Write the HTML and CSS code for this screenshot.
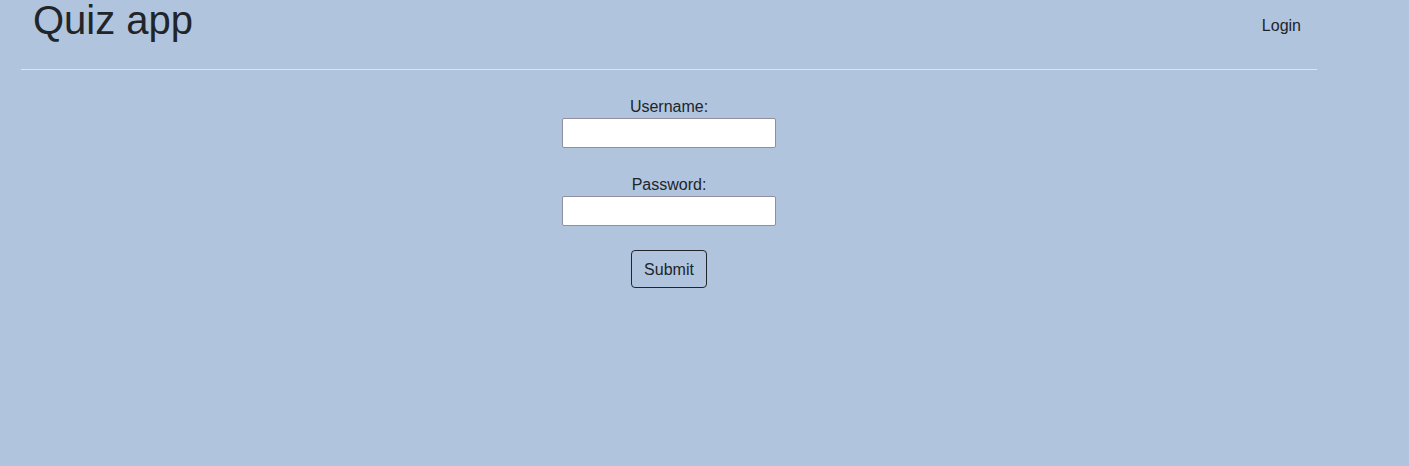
FILE: index.html
```html
<!DOCTYPE html>
<html lang="en">
<head>
<meta charset="utf-8">
<title>Quiz app</title>
<link rel="stylesheet" href="styles.css">
</head>
<body>
<div class="container">
  <header class="header">
    <h1 class="brand">Quiz app</h1>
    <nav class="nav"><a class="nav-link" href="#">Login</a></nav>
  </header>
  <form class="form">
    <div class="field">
      <label class="label" for="u">Username:</label>
      <input class="input" id="u" type="text">
    </div>
    <div class="field">
      <label class="label" for="p">Password:</label>
      <input class="input" id="p" type="password">
    </div>
    <button class="btn" type="button">Submit</button>
  </form>
</div>
</body>
</html>
```

FILE: styles.css
```css
html, body {
  margin: 0;
  padding: 0;
  background: #b0c4de;
  color: #212529;
  font-family: "Liberation Sans", Arial, sans-serif;
  font-size: 16px;
  line-height: 1.5;
}
.container {
  width: 1296px;
  margin-left: 21px;
}
.header {
  display: flex;
  justify-content: space-between;
  align-items: flex-start;
  height: 69px;
  border-bottom: 1px solid #dfe6ef;
}
.brand {
  margin: 0 0 0 12px;
  font-size: 40px;
  line-height: 40px;
  font-weight: 400;
}
.nav {
  padding-top: 14px;
  padding-right: 16px;
}
.nav-link {
  color: #212529;
  text-decoration: none;
  line-height: 24px;
}
.form {
  display: flex;
  flex-direction: column;
  align-items: center;
  padding-top: 24px;
  gap: 24px;
}
.field {
  display: flex;
  flex-direction: column;
  align-items: center;
}
.label {
  line-height: 23px;
  padding-top: 1px;
}
.input {
  box-sizing: border-box;
  width: 214px;
  height: 30px;
  margin: 0;
  border: 1px solid #8f8f9d;
  border-radius: 2px;
  background: #fff;
  font: inherit;
}
.btn {
  box-sizing: border-box;
  height: 38px;
  padding: 7px 12px 5px;
  border: 1px solid #212529;
  border-radius: 4px;
  background: transparent;
  color: #212529;
  font: inherit;
  line-height: 24px;
}
```
